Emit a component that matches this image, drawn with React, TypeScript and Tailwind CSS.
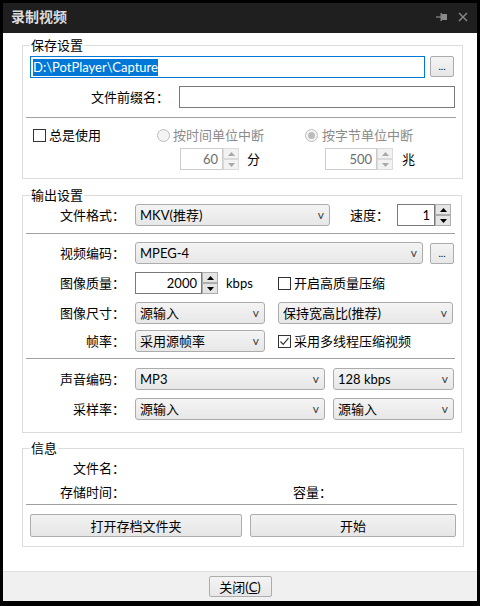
import React from "react";

const F = "font-['Lato','Noto_Sans_CJK_SC',sans-serif]";

function Sel({ w, text }: { w: string; text: string }) {
  return (
    <div
      className={`flex h-[22px] shrink-0 items-center justify-between rounded-[3px] border border-[#acacac] bg-linear-to-b from-[#f4f4f4] to-[#e7e7e7] pl-[4px] pr-[5px] ${w}`}
    >
      <span className="whitespace-nowrap">{text}</span>
      <span className="text-[12px] leading-[12px] text-[#404040]">v</span>
    </div>
  );
}

function Tri({ down, color }: { down?: boolean; color: string }) {
  return (
    <svg width="7" height="4" viewBox="0 0 7 4">
      <path d={down ? "M0 0H7L3.5 4z" : "M3.5 0L7 4H0z"} fill={color} />
    </svg>
  );
}

function Spin({ w, value, disabled }: { w: string; value: string; disabled?: boolean }) {
  const tri = disabled ? "#a8a8a8" : "#000000";
  const btn = disabled ? "border-[#dadada] bg-[#f2f2f2]" : "border-[#adadad] bg-[#e5e5e5]";
  return (
    <div className="flex h-[22px] shrink-0">
      <div
        className={`flex items-center justify-end border pr-[4px] ${w} ${
          disabled ? "border-[#cccccc] text-[#6d6d6d]" : "border-[#7a7a7a] text-black"
        }`}
      >
        {value}
      </div>
      <div className="flex w-[16px] flex-col">
        <div className={`flex h-[11px] items-center justify-center border ${btn}`}>
          <Tri color={tri} />
        </div>
        <div className={`flex h-[11px] items-center justify-center border ${btn}`}>
          <Tri down color={tri} />
        </div>
      </div>
    </div>
  );
}

function Check({ checked }: { checked?: boolean }) {
  return (
    <div className="flex h-[13px] w-[13px] shrink-0 items-center justify-center border border-[#333333] bg-white">
      {checked && (
        <svg width="11" height="11" viewBox="0 0 11 11">
          <path d="M1.5 5.5L4.2 8.3L9.5 2.2" stroke="#333333" strokeWidth="1.2" fill="none" />
        </svg>
      )}
    </div>
  );
}

function Radio({ dot }: { dot?: boolean }) {
  return (
    <div className="flex h-[13px] w-[13px] shrink-0 items-center justify-center rounded-full border border-[#bcbcbc] bg-[#f4f4f4]">
      {dot && <div className="h-[7px] w-[7px] rounded-full bg-[#bcbcbc]" />}
    </div>
  );
}

function Dots({ className }: { className: string }) {
  return (
    <div
      className={`flex h-[21px] w-[24px] shrink-0 items-end justify-center rounded-[2px] border border-[#acacac] bg-linear-to-b from-[#f4f4f4] to-[#e7e7e7] pb-[5px] text-[10px] leading-[10px] ${className}`}
    >
      ...
    </div>
  );
}

function Btn({ w, children }: { w: string; children: React.ReactNode }) {
  return (
    <div
      className={`flex h-[23px] shrink-0 items-center justify-center rounded-[2px] border border-[#adadad] bg-linear-to-b from-[#f2f2f2] to-[#e6e6e6] ${w}`}
    >
      {children}
    </div>
  );
}

function Label({ children }: { children: React.ReactNode }) {
  return <div className="mr-[10px] w-[95px] shrink-0 text-right whitespace-nowrap">{children}</div>;
}

export default function App() {
  return (
    <div
      className={`flex h-[606px] w-[480px] flex-col bg-black px-[3px] pt-[3px] pb-[5px] text-[13px] leading-[16px] text-black ${F}`}
    >
      {/* title bar */}
      <div className="flex h-[30px] shrink-0 items-center bg-[#1f1f1f] pr-[9px] pl-[8px] pb-[2px]">
        <span className="text-[14px] font-bold text-[#dcdcdc]">录制视频</span>
        <div className="ml-auto flex items-center gap-[11px]">
          <svg width="11" height="8" viewBox="0 0 11 8">
            <path d="M0 4H5" stroke="#8a8a8a" strokeWidth="1.2" />
            <rect x="4.5" y="0" width="1.4" height="8" fill="#8a8a8a" />
            <rect x="5.5" y="1" width="5.5" height="6" fill="#8a8a8a" />
          </svg>
          <svg width="10" height="10" viewBox="0 0 10 10">
            <path d="M1 1L9 9M9 1L1 9" stroke="#8a8a8a" strokeWidth="1.4" />
          </svg>
        </div>
      </div>

      {/* body */}
      <div className="flex flex-1 flex-col bg-white pr-[15px] pl-[19px]">
        {/* group 1 */}
        <fieldset className="mt-[5px] border border-[#dcdcdc] px-[7px] pt-[4px] pb-[8px]">
          <legend className="px-[1px] text-[13px] leading-[14px]">保存设置</legend>
          <div className="flex h-[22px]">
            <div className="flex h-[22px] w-[395px] items-center border border-[#0078d7] pl-[2px]">
              <span className="bg-[#0078d7] leading-[17px] text-white">{"D:\\PotPlayer\\Capture"}</span>
            </div>
            <Dots className="ml-[5px]" />
          </div>
          <div className="mt-[8px] flex h-[22px] items-center">
            <div className="mr-[10px] w-[139px] shrink-0 text-right">文件前缀名：</div>
            <div className="h-[22px] w-[276px] border border-[#7a7a7a]" />
          </div>
          <div className="mt-[9px] -mr-[1px] -ml-[4px] h-px bg-[#a0a0a0]" />
          <div className="mt-[9px] flex h-[16px] items-center">
            <div className="ml-[3px] flex w-[124px] items-center">
              <Check />
              <span className="ml-[3px]">总是使用</span>
            </div>
            <div className="flex w-[148px] items-center text-[#8b8b8b]">
              <Radio />
              <span className="ml-[3px]">按时间单位中断</span>
            </div>
            <div className="flex items-center text-[#8b8b8b]">
              <Radio dot />
              <span className="ml-[4px]">按字节单位中断</span>
            </div>
          </div>
          <div className="mt-[5px] flex h-[22px] items-center">
            <div className="ml-[150px] flex w-[145px] items-center">
              <Spin w="w-[43px]" value="60" disabled />
              <span className="ml-[8px]">分</span>
            </div>
            <Spin w="w-[52px]" value="500" disabled />
            <span className="ml-[9px]">兆</span>
          </div>
        </fieldset>

        {/* group 2 */}
        <fieldset className="mt-[9px] border border-[#dcdcdc] px-[7px] pt-[2px] pb-[12px]">
          <legend className="px-[1px] text-[13px] leading-[14px]">输出设置</legend>
          <div className="flex h-[22px] items-center">
            <Label>文件格式：</Label>
            <Sel w="w-[195px]" text="MKV(推荐)" />
            <div className="ml-[20px] w-[40px] shrink-0 whitespace-nowrap">速度：</div>
            <div className="ml-[7px]">
              <Spin w="w-[38px]" value="1" />
            </div>
          </div>
          <div className="mt-[7px] -mr-[1px] -ml-[4px] h-px bg-[#a0a0a0]" />
          <div className="mt-[8px] flex h-[22px] items-center">
            <Label>视频编码：</Label>
            <Sel w="w-[288px]" text="MPEG-4" />
            <Dots className="ml-[7px]" />
          </div>
          <div className="mt-[8px] flex h-[22px] items-center">
            <Label>图像质量：</Label>
            <div className="flex w-[143px] shrink-0 items-center">
              <Spin w="w-[67px]" value="2000" />
              <span className="ml-[8px]">kbps</span>
            </div>
            <Check />
            <span className="ml-[3px]">开启高质量压缩</span>
          </div>
          <div className="mt-[8px] flex h-[22px] items-center">
            <Label>图像尺寸：</Label>
            <Sel w="w-[130px]" text="源输入" />
            <div className="ml-[13px]">
              <Sel w="w-[175px]" text="保持宽高比(推荐)" />
            </div>
          </div>
          <div className="mt-[6px] flex h-[22px] items-center">
            <Label>帧率：</Label>
            <Sel w="w-[130px]" text="采用源帧率" />
            <div className="ml-[13px] flex items-center">
              <Check checked />
              <span className="ml-[3px]">采用多线程压缩视频</span>
            </div>
          </div>
          <div className="mt-[6px] -mr-[1px] -ml-[4px] h-px bg-[#a0a0a0]" />
          <div className="mt-[9px] flex h-[22px] items-center">
            <Label>声音编码：</Label>
            <Sel w="w-[190px]" text="MP3" />
            <div className="ml-[8px]">
              <Sel w="w-[121px]" text="128 kbps" />
            </div>
          </div>
          <div className="mt-[8px] flex h-[22px] items-center">
            <Label>采样率：</Label>
            <Sel w="w-[190px]" text="源输入" />
            <div className="ml-[8px]">
              <Sel w="w-[121px]" text="源输入" />
            </div>
          </div>
        </fieldset>

        {/* group 3 */}
        <fieldset className="mt-[8px] border border-[#dcdcdc] px-[7px] pt-0 pb-[9px]">
          <legend className="px-[1px] text-[13px] leading-[14px]">信息</legend>
          <div className="mt-[5px] flex h-[16px] items-center">
            <Label>文件名：</Label>
          </div>
          <div className="mt-[8px] flex h-[16px] items-center">
            <Label>存储时间：</Label>
            <div className="ml-[158px] whitespace-nowrap">容量：</div>
          </div>
          <div className="mt-[4px] -mr-[1px] -ml-[4px] h-px bg-[#a0a0a0]" />
          <div className="mt-[9px] flex gap-[8px]">
            <Btn w="w-[212px]">打开存档文件夹</Btn>
            <Btn w="w-[206px]">开始</Btn>
          </div>
        </fieldset>
      </div>

      {/* footer */}
      <div className="flex h-[30px] shrink-0 items-center justify-center border-t border-[#dfdfdf] bg-[#f0f0f0]">
        <div className="flex h-[21px] w-[63px] items-center justify-center rounded-[2px] border border-[#adadad] bg-linear-to-b from-[#f4f4f4] to-[#e7e7e7]">
          关闭(<span className="underline">C</span>)
        </div>
      </div>
    </div>
  );
}
